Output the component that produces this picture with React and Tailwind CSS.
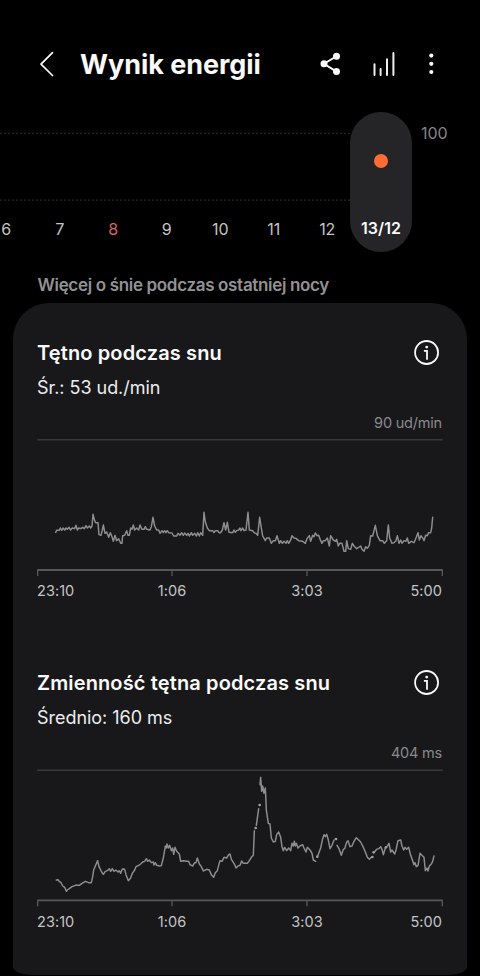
const days = ["6", "7", "8", "9", "10", "11", "12"];

// chart coordinates use three units per pixel
const heartRate = {
  viewBox: "21 -183 1218 414",
  top: 0.5 - 183 + 2,
  axis: 210,
  lines: [
    "77,97 80,91 88,91 91,84 95,91 99,84 104,90 108,84 112,88 117,82 122,90 127,84 134,86 138,76 142,90 146,84 152,86 158,82 163,86 168,77 172,84 178,78 182,84 186,78 189,43 194,62 197,68 204,68 207,104 213,106 217,90 220,75 225,100 230,96 236,112 241,98 246,110 250,124 255,106 260,122 266,116 272,130 276,130 278,107 284,106 290,92 294,106 298,106 302,84 306,88 310,75 314,90 320,84 326,90 330,75 336,88 342,88 346,80 350,88 360,90 364,80 369,52 374,78 380,90 386,90 390,100 396,92 400,98 404,92 408,98 412,92 416,98 426,99 431,108 440,108 444,100 450,106 455,98 460,106 464,99 470,106 474,100 478,108 484,98 488,106 494,100 499,108 503,98 508,108 512,98 518,106 522,37 526,66 532,84 538,92 548,92 552,98 556,92 563,92 567,98 572,98 577,90 582,68 587,90 592,67 597,97 608,98 612,90 616,97 620,92 626,90 630,84 633,92 638,84 642,92 648,90 654,37 658,90 668,92 672,98 678,100 683,106 689,52 694,84 698,108 706,122 710,114 718,114 724,130 730,122 736,122 741,107 748,130 752,122 757,130 762,124 768,130 772,122 776,130 781,122 786,107 792,114 798,115 806,122 818,124 826,130 831,116 838,107 842,124 848,106 852,110 856,99 861,107 866,106 872,122 876,130 880,122 886,122 892,114 898,138 902,107 910,120 917,124 920,118 925,138 929,130 936,130 942,154 947,154 950,122 955,146 962,148 967,130 972,138 980,146 992,138 996,148 1002,154 1007,140 1012,145 1018,136 1022,107 1028,108 1036,76 1042,107 1050,122 1058,122 1063,130 1070,122 1075,75 1079,114 1086,130 1092,128 1098,122 1102,107 1107,130 1112,120 1116,130 1122,122 1128,124 1132,114 1136,130 1144,124 1152,128 1158,114 1164,98 1168,120 1173,107 1178,114 1182,122 1187,106 1192,107 1196,98 1202,98 1205,84 1208,52",
  ],
  dots: [],
};

const variability = {
  viewBox: "21 27 1218 414",
  top: 31,
  axis: 421,
  lines: [
    "79,360 84,359 88,365 92,366 98,378 104,382 109,394 112,390 118,386 126,380 136,376 148,376 156,370 166,364 176,368 184,368 188,350 191,330 196,318 203,302 207,320 211,328 215,336 220,343 226,334 232,332 238,326 242,334 247,326 252,334 258,330 264,336 268,332 272,340 277,327 284,328 288,344 295,362 302,354 307,340 314,330 318,320 326,316 332,312 338,306 344,304 349,296 353,304 358,300 364,308 370,306 372,315 376,308 380,316 388,318 394,317 400,294 403,276 406,258 409,264 411,252 415,264 419,256 424,272 428,264 431,283 435,262 440,274 448,282 452,304 460,302 470,304 476,304 480,314 488,318 494,308 498,308 502,294 508,312 514,320 520,333 530,328 538,330 544,344 551,352 556,338 562,332 565,320 570,302 576,304 582,292 590,294 596,284 600,282 604,298 608,304 614,314 618,324 624,318 630,316 635,303 640,310 652,310 658,302 664,292 670,286 673,212",
    "679,196 686,146",
    "690,74 692,52 695,94 698,78 702,100 706,84 709,150 715,190 720,192 724,234 730,246 736,244 740,224 746,216 752,232 756,260 760,272 764,262 770,272 776,264 782,272 786,250 790,258 793,244 796,258 799,250 804,264 810,258 818,254 822,264 828,276 832,262 840,270 846,280 850,300 857,304",
    "864,286 872,264 878,236 882,224 886,230 890,223 894,236 900,266 906,256 912,240",
    "921,256 927,266 934,286 940,268 944,266 950,246 954,242 960,260 966,258 972,244 979,233 986,240 992,246 1000,262 1006,276 1012,292 1018,298 1024,292",
    "1034,275 1040,268 1046,266 1052,260 1056,268 1060,284 1066,264",
    "1072,258 1077,250 1082,276 1086,270 1094,282 1098,270 1104,242 1112,240 1116,258 1121,270 1125,262 1130,268 1136,262 1142,286 1148,302 1152,314 1155,308 1159,320 1164,316 1170,280 1178,288 1182,292 1186,332 1191,324 1194,333 1198,318 1204,312 1208,304 1212,288",
  ],
  dots: [[677, 204], [689, 135], [862, 290], [918, 237], [1027, 291], [1031, 277], [1068, 262]],
};

const InfoIcon = () => (
  <svg viewBox="0 0 26 26" className="h-[26px] w-[26px]" fill="none" stroke="#fafafa">
    <circle cx="12.6" cy="12.5" r="11.5" strokeWidth="1.8" />
    <circle cx="12.7" cy="7.1" r="1.4" fill="#fafafa" stroke="none" />
    <path d="M9.9 10.9H13V19.7" strokeWidth="1.8" />
  </svg>
);

const Chart = ({ data }) => (
  <svg viewBox={data.viewBox} className="block h-[138px] w-[406px]" fill="none">
    <path d={`M22 ${data.top}H1238`} stroke="#39393b" strokeWidth="4.5" />
    <path d={`M22 ${data.axis}H1238`} stroke="#575757" strokeWidth="5.5" />
    {[23, 426, 831, 1237].map((x) => (
      <path key={x} d={`M${x} ${data.axis}v18`} stroke="#575757" strokeWidth="4" />
    ))}
    {data.lines.map((points) => (
      <polyline
        key={points}
        points={points}
        stroke="#8e8e90"
        strokeWidth="4.4"
        strokeLinejoin="round"
        strokeLinecap="round"
      />
    ))}
    {data.dots.map(([x, y]) => (
      <circle key={x} cx={x} cy={y} r="4" fill="#a0a0a2" />
    ))}
  </svg>
);

const SleepSection = ({ title, summary, max, data }) => (
  <section className="h-[330.5px]">
    <div className="flex h-[26px] items-center justify-between pr-[3px]">
      <h2 className="whitespace-nowrap text-[20px] font-semibold leading-[26px] tracking-[0.13px] text-[#fafafa]">
        {title}
      </h2>
      <InfoIcon />
    </div>
    <p className="mt-2 text-[18px] leading-7 tracking-[-0.03px] text-[#ededed]">{summary}</p>
    <p className="mt-[11px] pr-px text-right text-[14.5px] leading-5 tracking-[-0.2px] text-[#8a8a8c]">{max}</p>
    <div className="mt-[6px]">
      <Chart data={data} />
    </div>
    <div className="mt-[4.5px] flex pr-px text-[14.5px] leading-5 tracking-[0.05px] text-[#c4c4c6]">
      <span className="w-[90px]">23:10</span>
      <span className="w-[90px] text-center">1:06</span>
      <span className="ml-[45px] w-[90px] text-center">3:03</span>
      <span className="flex-1 text-right">5:00</span>
    </div>
  </section>
);

const Header = () => (
  <header className="flex h-28 items-center pl-[38px] pr-[41px] pt-4">
    <svg viewBox="0 0 18 26" className="h-[26px] w-[18px]" fill="none">
      <path
        d="M14.5 1.7L3 13.2L14.5 24.5"
        stroke="#fafafa"
        strokeWidth="1.7"
        strokeLinecap="round"
        strokeLinejoin="round"
      />
    </svg>
    <h1 className="ml-[24px] whitespace-nowrap pt-px text-[27px] font-bold leading-8 tracking-[-0.05px] text-[#fafafa]">
      Wynik energii
    </h1>
    <div className="ml-auto flex items-center">
      <svg viewBox="0 0 22 26" className="h-[26px] w-[22px]" fill="#fafafa">
        <path d="M16.5 5.2L4 12.8L16.5 20.6" fill="none" stroke="#fafafa" strokeWidth="1.9" />
        <circle cx="4" cy="12.8" r="3.5" />
        <circle cx="16.5" cy="5.2" r="3.5" />
        <circle cx="16.5" cy="20.6" r="3.5" />
      </svg>
      <svg viewBox="0 0 24 26" className="ml-[30px] h-[26px] w-6" fill="none">
        <path
          d="M2.5 13.2V24M8.6 18V24M15 8.2V24M21.4 2V24"
          stroke="#efefef"
          strokeWidth="2"
          strokeLinecap="round"
        />
      </svg>
      <svg viewBox="0 0 14 26" className="ml-[29px] h-[26px] w-[14px]" fill="#fafafa">
        <circle cx="6.3" cy="4.6" r="2.1" />
        <circle cx="6.3" cy="12.8" r="2.1" />
        <circle cx="6.3" cy="21" r="2.1" />
      </svg>
    </div>
  </header>
);

const Timeline = () => (
  <div className="flex h-[140px]">
    <div className="w-[350px] overflow-hidden pt-5">
      <svg viewBox="0 0 350 70" className="block h-[70px] w-[350px]">
        <path d="M0 1.3H350M0 68.2H350" stroke="#262626" strokeWidth="1.3" strokeDasharray="2 2" />
      </svg>
      <div className="-ml-[20.5px] mt-4 flex text-[16px] leading-[22px] tracking-[-0.1px] text-[#c4c4c4]">
        {days.map((day) => (
          <span
            key={day}
            className={`w-[53.5px] shrink-0 text-center ${day === "8" ? "text-[#d9625c]" : ""}`}
          >
            {day}
          </span>
        ))}
      </div>
    </div>
    <div className="flex w-[62px] flex-col items-center rounded-full bg-[#252527]">
      <span className="mt-[42px] h-[14px] w-[14px] rounded-full bg-[#ff6c35]" />
      <span className="mt-[49px] text-[16px] font-semibold leading-[22px] tracking-[0.05px] text-[#fafafa]">
        13/12
      </span>
    </div>
    <span className="ml-[9px] mt-[10px] text-[16px] leading-[22px] tracking-[-0.1px] text-[#858585]">100</span>
  </div>
);

const App = () => (
  <div className="h-[976px] w-[480px] overflow-hidden bg-black font-['Inter',sans-serif]">
    <Header />
    <Timeline />
    <p className="mt-[21px] h-[30px] whitespace-nowrap pl-[37.5px] text-[17px] font-semibold leading-[24px] tracking-[-0.33px] text-[#929294]">
      Więcej o śnie podczas ostatniej nocy
    </p>
    <main className="mx-[13px] h-[671.5px] bg-[#18181a] px-6 pt-[36.5px] [border-radius:36px_36px_20px_20px/36px_36px_8px_8px]">
      <SleepSection
        title="Tętno podczas snu"
        summary="Śr.: 53 ud./min"
        max="90 ud/min"
        data={heartRate}
      />
      <SleepSection
        title="Zmienność tętna podczas snu"
        summary="Średnio: 160 ms"
        max="404 ms"
        data={variability}
      />
    </main>
  </div>
);

export default App;
